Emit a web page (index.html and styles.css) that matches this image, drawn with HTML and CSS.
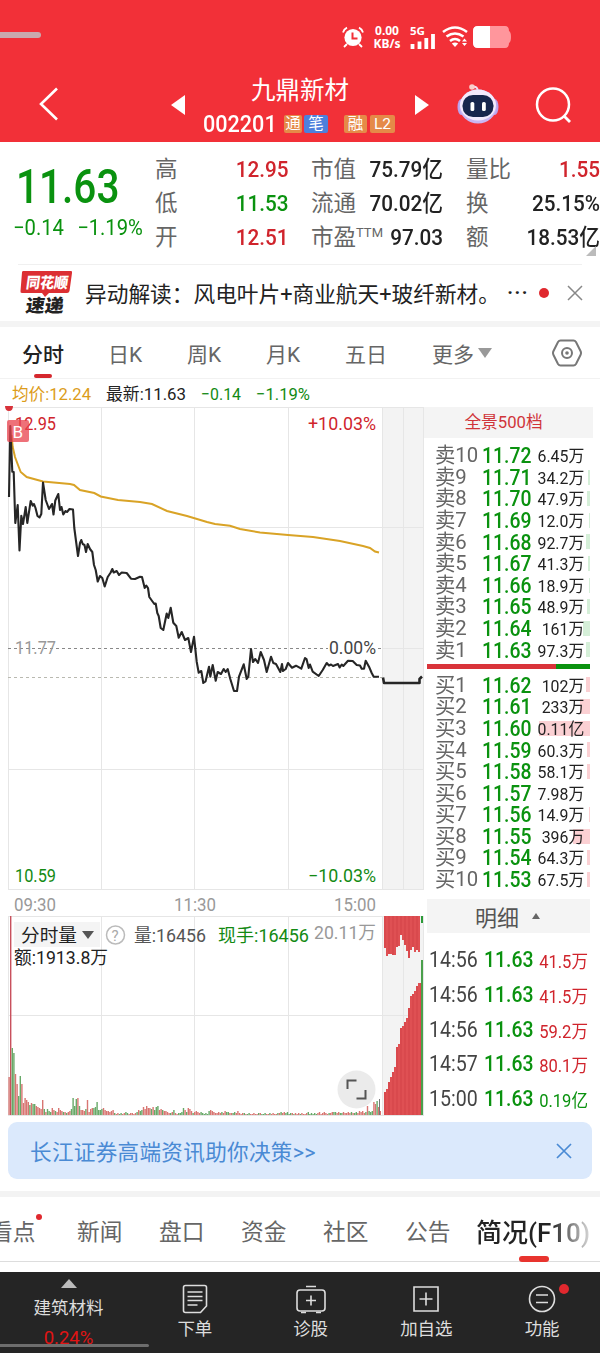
FILE: index.html
```html
<!DOCTYPE html>
<html lang="zh-CN">
<head>
    <meta charset="UTF-8">
    <meta name="viewport" content="width=device-width, initial-scale=1.0">
    <title>九鼎新材 002201</title>
    <link rel="stylesheet" href="styles.css">
</head>
<body>

    <header class="header">
        <div class="status-bar">
            <span class="pill"></span>
            <svg class="alarm" width="22" height="22" viewBox="0 0 22 22">
                <circle cx="11" cy="11.5" r="8.6" fill="#fff"/>
                <path d="M1 6.5Q2 3 5 1.6M21 6.5Q20 3 17 1.6M5 18l-3 3M17 18l3 3" stroke="#fff" stroke-width="1.8" fill="none"/>
                <path d="M10.5 6.5v6h5" stroke="#f23038" stroke-width="2" fill="none"/>
            </svg>
            <span class="speed">0.00<br>KB/s</span>
            <svg class="signal" width="25" height="24" viewBox="0 -2 25 24">
                <text x="0" y="8" textLength="15" lengthAdjust="spacingAndGlyphs">5G</text>
                <path d="M2.500 22v-5M9.500 22v-7.500M16.300 22V11M23 22V7" stroke="#fff" stroke-width="3.800"/>
            </svg>
            <svg class="wifi" width="26" height="21" viewBox="0 0 26 21">
                <path d="M1 6Q13-3 25 6M4.500 10.500q8.500-6 17 0M8 15q5-4 10 0" stroke="#fff" stroke-width="2.600" fill="none"/>
                <path d="M9.800 17.500q3.200-2 6.400 0L13 21zM20 15.500l2.500-3 2.500 3zM20 17l2.500 3 2.500-3z" fill="#fff"/>
            </svg>
            <svg class="battery" width="38" height="22" viewBox="0 0 38 22">
                <path d="M5 0h27q4 0 4 5 2 1 2 6t-2 6q0 5-4 5H5q-5 0-5-5V5q0-5 5-5z" fill="#ff969c"/>
                <path d="M5 0h12v22H5q-5 0-5-5V5q0-5 5-5z" fill="#fff"/>
            </svg>
        </div>
        <div class="title-bar">
            <svg class="back" width="20" height="34" viewBox="0 0 20 34"><path d="M18 1.500L2 17l16 15.500" stroke="#fff" stroke-width="2.600" fill="none"/></svg>
            <svg class="prev" width="14" height="20" viewBox="0 0 14 20"><path d="M14 0v20L0 10z" fill="#fff"/></svg>
            <div class="stock">
                <div class="stock-name">九鼎新材</div>
                <div class="stock-code">
                    <span class="code">002201</span>
                    <span class="tag tag-tong">通</span>
                    <span class="tag tag-blue">笔</span>
                    <span class="tag tag-rong">融</span>
                    <span class="tag tag-l2">L2</span>
                </div>
            </div>
            <svg class="next" width="14" height="20" viewBox="0 0 14 20"><path d="M0 0v20L14 10z" fill="#fff"/></svg>
            <svg class="robot" width="42" height="40" viewBox="0 0 42 40">
                <path d="M15.500 3Q21 2 20.500 7" stroke="#f4ddf0" stroke-width="2" fill="none"/>
                <circle cx="15" cy="3" r="2.800" fill="#f9cfcb"/>
                <ellipse cx="4.500" cy="23" rx="4" ry="8" fill="#b9a5ee"/>
                <ellipse cx="37.500" cy="23" rx="4" ry="8" fill="#b9a5ee"/>
                <ellipse cx="21" cy="22.500" rx="18.500" ry="17" fill="#c9b6f3"/>
                <ellipse cx="21" cy="21" rx="18" ry="15.500" fill="#f3eafd"/>
                <rect x="5.500" y="11" width="31" height="22" rx="10.500" fill="#17264d"/>
                <rect x="13.500" y="18" width="3.800" height="9" rx="1.600" fill="#fff"/>
                <rect x="25" y="18" width="3.800" height="9" rx="1.600" fill="#fff"/>
            </svg>
            <svg class="search" width="37" height="36" viewBox="0 0 37 36"><circle cx="18" cy="17.500" r="16" stroke="#fff" stroke-width="2.500" fill="none"/><path d="M29 29l6 6" stroke="#fff" stroke-width="2.800"/></svg>
        </div>
    </header>

    <section class="quote">
        <div class="price">
            <div class="price-now">11.63</div>
            <div class="price-change"><span>−0.14</span><span>−1.19%</span></div>
        </div>
        <dl class="stats stats-a">
            <dt>高</dt><dd class="red">12.95</dd>
            <dt>低</dt><dd class="green">11.53</dd>
            <dt>开</dt><dd class="red">12.51</dd>
        </dl>
        <dl class="stats stats-b">
            <dt>市值</dt><dd>75.79亿</dd>
            <dt>流通</dt><dd>70.02亿</dd>
            <dt>市盈<sup>TTM</sup></dt><dd>97.03</dd>
        </dl>
        <dl class="stats stats-c">
            <dt>量比</dt><dd class="red">1.55</dd>
            <dt>换</dt><dd>25.15%</dd>
            <dt>额</dt><dd>18.53亿</dd>
        </dl>
        <span class="corner"></span>
    </section>

    <section class="news">
        <svg class="news-logo" width="54" height="45" viewBox="0 0 54 45">
            <path d="M4 1h48q1.500 0 1 2l-2.500 18q-.5 2-2.500 2H30l-4 4-3-4H3q-2 0-1.500-2L3 2.500Q3 1 4 1z" fill="#dc2f33"/>
            <g transform="skewX(-8)">
                <text class="logo-top" x="9" y="18" textLength="42" lengthAdjust="spacingAndGlyphs">同花顺</text>
                <text class="logo-bottom" x="12" y="42" textLength="38" lengthAdjust="spacingAndGlyphs">速递</text>
            </g>
        </svg>
        <span class="news-text">异动解读：风电叶片+商业航天+玻纤新材。</span>
        <span class="dots">···</span>
        <span class="red-dot"></span>
        <svg class="close" width="16" height="16" viewBox="0 0 16 16"><path d="M1 1l14 14M15 1L1 15" stroke="#888" stroke-width="1.500"/></svg>
    </section>

    <nav class="period">
        <span class="active">分时</span>
        <span>日K</span>
        <span>周K</span>
        <span>月K</span>
        <span>五日</span>
        <span class="more">更多<i class="tri-down"></i></span>
        <svg width="30" height="28" viewBox="0 0 30 28"><path d="M8.500 1.500h13Q23 1.500 24 3l4.500 9q1 2 0 4L24 25q-1 1.500-2.500 1.500h-13Q7 26.500 6 25l-4.500-9q-1-2 0-4L6 3q1-1.500 2.500-1.500z" fill="none" stroke="#777" stroke-width="2"/><circle cx="15" cy="14" r="5" fill="none" stroke="#777" stroke-width="2"/><circle cx="15" cy="14" r="1.800" fill="#777"/></svg>
    </nav>

    <main class="board">
        <svg class="chart" width="424" height="739" viewBox="0 379 424 739">
            <g class="info">
                <text x="12" y="400" textLength="79" lengthAdjust="spacingAndGlyphs" fill="#dc9c1a">均价:12.24</text>
                <text x="106" y="400" textLength="80" lengthAdjust="spacingAndGlyphs" fill="#222">最新:11.63</text>
                <text x="201" y="400" textLength="40" lengthAdjust="spacingAndGlyphs" fill="#138a13">−0.14</text>
                <text x="256" y="400" textLength="54" lengthAdjust="spacingAndGlyphs" fill="#138a13">−1.19%</text>
            </g>

            <rect x="382" y="407" width="41" height="482" fill="#f3f3f3"/>
            <rect x="382" y="916" width="41" height="199" fill="#f3f3f3"/>
            <path class="grid" d="M8 407.500H424M8 527.500H424M8 769.500H424M8 889.500H424M8 916.500H424M8 1015.500H424M8 1115.500H424"/>
            <path class="grid" d="M8.500 407V889M101.500 407V889M194.500 407V889M288.500 407V889M382.500 407V889M403.500 407V889M423.500 407V889"/>
            <path class="grid" d="M8.500 916V1115M101.500 916V1115M194.500 916V1115M288.500 916V1115M382.500 916V1115M403.500 916V1115M423.500 916V1115"/>
            <path d="M382 648.500h41" class="grid"/>
            <path d="M8 648.500H328M378 648.500h5" stroke="#888" stroke-dasharray="3 3"/>
            <path d="M8 677.500H382" stroke="#b9b9b0" stroke-dasharray="3 3"/>

            <g id="volume" shape-rendering="crispEdges"></g>

            <polyline id="avg-line" class="avg"/>
            <polyline id="price-line" class="line"/>
            <path class="line auction" d="M383 677.500l1 5.500H419.500V679l2.500-2.500"/>

            <g class="axis">
                <text x="15" y="429.500" textLength="41" lengthAdjust="spacingAndGlyphs" fill="#d0242c">12.95</text>
                <text x="308" y="429.500" textLength="68" lengthAdjust="spacingAndGlyphs" fill="#d0242c">+10.03%</text>
                <text x="15" y="654" textLength="41" lengthAdjust="spacingAndGlyphs" fill="#999">11.77</text>
                <text x="329" y="654" textLength="47" lengthAdjust="spacingAndGlyphs" fill="#444">0.00%</text>
                <text x="15" y="882" textLength="41" lengthAdjust="spacingAndGlyphs" fill="#138a13">10.59</text>
                <text x="308" y="882" textLength="68" lengthAdjust="spacingAndGlyphs" fill="#138a13">−10.03%</text>
                <text x="14" y="910.500" textLength="42" lengthAdjust="spacingAndGlyphs" fill="#999">09:30</text>
                <text x="174" y="910.500" textLength="42" lengthAdjust="spacingAndGlyphs" fill="#999">11:30</text>
                <text x="334" y="910.500" textLength="42" lengthAdjust="spacingAndGlyphs" fill="#999">15:00</text>
            </g>

            <path d="M5 406h8q0 5-4 5t-4-5z" fill="#d8323a"/>
            <rect x="7" y="420" width="22" height="22" rx="2" fill="#e8424c" fill-opacity=".75"/>
            <text x="12.500" y="438" class="buy-mark">B</text>

            <rect x="14" y="922" width="86" height="25" fill="#f4f4f4"/>
            <g class="vol-info">
                <text x="21" y="942" textLength="56" lengthAdjust="spacingAndGlyphs" fill="#222">分时量</text>
                <path d="M82 931h12l-6 8z" fill="#555"/>
                <circle cx="115.500" cy="935" r="9" fill="none" stroke="#bbb" stroke-width="1.500"/>
                <text x="111.500" y="940.500" class="help">?</text>
                <text x="134" y="942" textLength="72" lengthAdjust="spacingAndGlyphs" fill="#555">量:16456</text>
                <text x="218" y="942" textLength="91" lengthAdjust="spacingAndGlyphs" fill="#138a13">现手:16456</text>
                <text x="314" y="939" textLength="62" lengthAdjust="spacingAndGlyphs" fill="#999">20.11万</text>
                <text x="14" y="963.500" textLength="94" lengthAdjust="spacingAndGlyphs" fill="#222">额:1913.8万</text>
            </g>

            <circle cx="356.500" cy="1089.500" r="19" fill="#ebebeb"/>
            <path d="M347.500 1089v-8.500h9M365.500 1090v8.500h-9" fill="none" stroke="#555" stroke-width="2"/>
        </svg>

        <aside class="depth">
            <div class="depth-title">全景500档</div>
            <div class="orders" id="asks"></div>
            <div class="ratio"><span></span></div>
            <div class="orders" id="bids"></div>
            <div class="detail-title">明细<i class="tri-up"></i></div>
            <div class="ticks" id="ticks"></div>
        </aside>
    </main>

    <div class="banner">
        <span>长江证券高端资讯助你决策&gt;&gt;</span>
        <svg width="16" height="16" viewBox="0 0 16 16"><path d="M1 1l14 14M15 1L1 15" stroke="#4a8ad4" stroke-width="1.700"/></svg>
    </div>

    <nav class="sections">
        <span class="first">看点<i class="red-dot small"></i></span>
        <span>新闻</span>
        <span>盘口</span>
        <span>资金</span>
        <span>社区</span>
        <span>公告</span>
        <span class="active">简况(F10)</span>
    </nav>

    <footer class="bottom">
        <div class="sector">
            <i class="tri-up light"></i>
            <span>建筑材料</span>
            <b>0.24%</b>
        </div>
        <div class="item">
            <svg width="28" height="30" viewBox="0 0 28 30"><path d="M4.500 1.500h19q2 0 2 2V22l-6 6.500h-15q-2 0-2-2v-23q0-2 2-2zM6.500 8h15M6.500 12.500h15M6.500 16.500h15M6.500 21h10"/></svg>
            <span>下单</span>
        </div>
        <div class="item">
            <svg width="30" height="30" viewBox="0 0 30 30"><rect x="1" y="6" width="28" height="21" rx="3"/><path d="M10 2.500h10M15 11.500v10M10 16.500h10M5 28.500h5M20 28.500h5"/></svg>
            <span>诊股</span>
        </div>
        <div class="item">
            <svg width="28" height="30" viewBox="0 0 28 30"><path d="M2 3h24v24H2zM14 8.500v13M7.500 15h13"/></svg>
            <span>加自选</span>
        </div>
        <div class="item">
            <svg width="28" height="30" viewBox="0 0 28 30"><circle cx="14" cy="15" r="12.500"/><path d="M8 11h12M8 18.500h12"/></svg>
            <span>功能</span>
            <i class="red-dot badge"></i>
        </div>
        <span class="home-bar"></span>
    </footer>

    <script src="app.js"></script>
</body>
</html>
```

FILE: styles.css
```css
* {
    box-sizing: border-box;
}
body {
    margin: 0;
    width: 600px;
    height: 1353px;
    overflow: hidden;
    background: #fff;
    color: #222;
    font-family: Roboto, "Noto Sans CJK SC", sans-serif;
}
svg {
    display: block;
    flex: none;
}
i {
    font-style: normal;
}
.red {
    color: #d0242c;
}
.green {
    color: #0a920f;
}

/* header */
.header {
    height: 142px;
    background: #f23038;
    color: #fff;
}
.status-bar {
    display: flex;
    align-items: center;
    height: 73px;
}
.pill {
    width: 41px;
    height: 6px;
    margin-top: -3px;
    background: #c9a9ad;
    border-radius: 0 3px 3px 0;
}
.alarm {
    margin-left: 301px;
}
.speed {
    width: 28px;
    margin-left: 9px;
    font: bold 12px/13px "Noto Sans", sans-serif;
    text-align: center;
    white-space: nowrap;
}
.signal {
    margin-left: 9px;
}
.signal text {
    font: bold 11px "Noto Sans", sans-serif;
    fill: #fff;
}
.wifi {
    margin-left: 7px;
}
.battery {
    margin-left: 5px;
}
.title-bar {
    display: flex;
    height: 69px;
}
.back {
    margin: 14px 0 0 39px;
}
.prev {
    margin: 22px 0 0 112px;
}
.stock {
    width: 230px;
    padding-left: 18px;
}
.stock-name {
    width: 194px;
    height: 34px;
    line-height: 36px;
    font-size: 24.500px;
    text-align: center;
}
.stock-code {
    display: flex;
    align-items: center;
    height: 34px;
}
.code {
    width: 81px;
    font-size: 24px;
    font-weight: 500;
    transform: scaleX(.9);
    transform-origin: left;
}
.tag {
    height: 18px;
    line-height: 18px;
    font-size: 15.500px;
    text-align: center;
    background: #e58a48;
    border-radius: 2px;
}
.tag-tong {
    width: 18px;
}
.tag-blue {
    width: 24px;
    margin-left: 2px;
    background: #4d80dc;
}
.tag-rong {
    width: 23px;
    margin-left: 16px;
}
.tag-l2 {
    width: 25px;
    margin-left: 3px;
}
.next {
    margin: 22px 0 0 0;
}
.robot {
    margin: 11px 0 0 28px;
}
.search {
    margin: 14px 0 0 36px;
}

/* quote */
.quote {
    position: relative;
    display: flex;
    height: 122px;
    padding-top: 10px;
}
.price {
    width: 155px;
    padding-left: 16px;
    color: #0a920f;
}
.price-now {
    height: 62px;
    line-height: 69px;
    font-size: 48px;
    font-weight: 500;
    transform: scaleX(.845);
    transform-origin: left;
}
.price-change {
    display: flex;
    gap: 14px;
    margin-left: -3px;
    font-size: 21.500px;
    line-height: 27px;
    transform: scaleX(.94);
    transform-origin: left;
}
.stats {
    display: grid;
    grid-template-columns: auto 1fr;
    grid-template-rows: repeat(3, 34px);
    align-items: center;
    margin: 0;
    line-height: 34px;
}
.stats-a {
    width: 133px;
}
.stats-b {
    width: 132px;
    margin-left: 23px;
}
.stats-c {
    width: 134px;
    margin-left: 23px;
}
.stats dt {
    color: #666;
    font-size: 22.500px;
    white-space: nowrap;
}
.stats sup {
    font-size: 13px;
    line-height: 0;
    vertical-align: 8px;
}
.stats dd {
    margin: 0 0 0 -30px;
    font-size: 22.500px;
    font-weight: 500;
    text-align: right;
    white-space: nowrap;
    transform: scaleX(.92);
    transform-origin: right;
}
.corner {
    position: absolute;
    right: 4px;
    bottom: 8px;
    border: 5px solid #bbb;
    border-top-color: transparent;
    border-left-color: transparent;
}

/* news */
.news {
    position: relative;
    display: flex;
    align-items: center;
    height: 63px;
    padding-left: 19px;
    border-bottom: 6px solid #f4f4f4;
}
.news::before {
    content: "";
    position: absolute;
    top: 0;
    left: 18px;
    right: 18px;
    border-top: 1px solid #f0f0f0;
}
.news-text {
    width: 420px;
    margin-left: 12px;
    font-size: 21.700px;
    white-space: nowrap;
}
.logo-top {
    font: 900 15px "Noto Sans CJK SC", sans-serif;
    fill: #fff;
}
.logo-bottom {
    font: 900 18px "Noto Sans CJK SC", sans-serif;
    fill: #222;
}
.dots {
    width: 19px;
    margin-left: 2px;
    font-size: 22px;
    font-weight: 500;
    letter-spacing: 1px;
}
.red-dot {
    flex: none;
    width: 10px;
    height: 10px;
    background: #e0282e;
    border-radius: 50%;
}
.news .red-dot {
    margin-left: 13px;
}
.close {
    margin-left: 18px;
}

/* period tabs */
.period {
    display: flex;
    align-items: center;
    height: 52px;
    padding-left: 22px;
    border-bottom: 1px solid #f2f2f2;
    color: #666;
    font-size: 21px;
}
.period span {
    position: relative;
    width: 79px;
    white-space: nowrap;
}
.period .active {
    width: 86px;
    color: #222;
    font-weight: 500;
}
.period .active::after {
    content: "";
    position: absolute;
    left: 12px;
    bottom: -10px;
    width: 18px;
    height: 4px;
    background: #d5272d;
    border-radius: 2px;
}
.period .more {
    display: flex;
    align-items: center;
    width: 120px;
    margin-left: 8px;
}
.tri-down {
    margin-left: 4px;
    border: 7.500px solid transparent;
    border-top: 10px solid #999;
    border-bottom: 0;
}

/* chart */
.board {
    display: flex;
    height: 739px;
}
.chart text {
    font-size: 18px;
}
.chart .info text {
    font-size: 17px;
}
.grid {
    stroke: #e6e6e6;
    fill: none;
}
.line {
    fill: none;
    stroke: #262626;
    stroke-width: 2.100;
    stroke-linejoin: round;
}
.auction {
    stroke-width: 2.600;
}
.avg {
    fill: none;
    stroke: #d9a326;
    stroke-width: 2;
}
.chart .buy-mark {
    font-size: 17px;
    fill: #fff;
}
.chart .help {
    font-size: 15px;
    fill: #aaa;
}

/* order book */
.depth {
    width: 169px;
    padding-top: 28px;
}
.depth-title {
    height: 31px;
    margin-bottom: 7px;
    padding-right: 10px;
    background: #f4f4f4;
    color: #d0343a;
    font-size: 16.700px;
    line-height: 31px;
    text-align: center;
}
.order {
    position: relative;
    display: flex;
    align-items: center;
    height: 21.600px;
    margin-right: 3px;
    padding-left: 11px;
    line-height: 21px;
}
.order span {
    position: relative;
    white-space: nowrap;
}
.level {
    flex: none;
    width: 47px;
    color: #666;
    font-size: 21px;
    transform: scaleX(.97);
    transform-origin: left;
}
.deal {
    flex: none;
    width: 50px;
    color: #0a920f;
    font-size: 22px;
    font-weight: 500;
    transform: scaleX(.88);
    transform-origin: left;
}
.hands {
    flex: 1;
    min-width: 0;
    display: flex;
    justify-content: flex-end;
    top: 1px;
    padding-right: 6px;
    font-size: 16.500px;
    transform: scaleX(.96);
    transform-origin: right;
}
.bar {
    position: absolute;
    top: 3px;
    right: 0;
    height: 15px;
    background: #d5efd8;
}
#bids .bar {
    background: #fbd0d3;
}
.ratio {
    height: 5px;
    margin: 3px 3px 5.500px;
    background: #0a920f;
}
.ratio span {
    display: block;
    width: 129px;
    height: 5px;
    background: #d9333a;
}
.detail-title {
    display: flex;
    align-items: center;
    justify-content: center;
    height: 34px;
    margin: 8.500px 3px 9px;
    padding-right: 2px;
    background: #f4f4f4;
    color: #555;
    font-size: 22px;
}
.tri-up {
    margin-left: 13px;
    border: 4.500px solid transparent;
    border-bottom: 6px solid #666;
    border-top: 0;
}
.tick {
    display: flex;
    align-items: center;
    height: 34.900px;
    padding: 0 5px;
}
.tick span {
    white-space: nowrap;
}
.tick .time {
    flex: none;
    width: 55px;
    color: #444;
    font-size: 22px;
    transform: scaleX(.89);
    transform-origin: left;
}
.tick .amount {
    flex: 1;
    display: flex;
    justify-content: flex-end;
    min-width: 0;
    padding-top: 1px;
    font-size: 18px;
    transform: scaleX(.92);
    transform-origin: right;
}

/* banner and section tabs */
.banner {
    display: flex;
    align-items: center;
    justify-content: space-between;
    height: 57px;
    margin: 4px 8px 12px;
    padding: 0 20px 0 22px;
    background: #dbe9fc;
    border-radius: 9px;
    color: #4a8ad4;
    font-size: 21.600px;
    letter-spacing: .3px;
}
.sections {
    position: relative;
    display: flex;
    align-items: center;
    height: 71px;
    padding-top: 2px;
    border-top: 6px solid #f3f3f3;
    border-bottom: 1px solid #ddd;
    color: #666;
    font-size: 22.700px;
}
.sections span {
    position: relative;
    flex: none;
    width: 82px;
    white-space: nowrap;
}
.sections .first {
    width: 87px;
    margin-left: -10px;
}
.sections .small {
    position: absolute;
    top: 0;
    left: 46px;
    width: 6px;
    height: 6px;
}
.sections .active {
    width: 115px;
    margin-left: -11px;
    color: transparent;
    background: linear-gradient(90deg, #222 65%, #ddd 100%);
    -webkit-background-clip: text;
    background-clip: text;
    font-size: 26px;
    font-weight: 500;
}
.sections::after {
    content: "";
    position: absolute;
    left: 519px;
    bottom: -1px;
    width: 30px;
    height: 6px;
    background: #e8342e;
    border-radius: 3px;
}

/* bottom bar */
.bottom {
    position: relative;
    display: flex;
    height: 81px;
    margin-top: 10px;
    background: #252525;
    color: #ddd;
    font-size: 17.500px;
}
.sector {
    display: flex;
    flex-direction: column;
    align-items: center;
    width: 137px;
    padding-top: 7px;
}
.sector span {
    height: 28px;
    margin-top: 6px;
    line-height: 28px;
}
.sector b {
    height: 34px;
    color: #e01414;
    font-size: 18.500px;
    font-weight: 400;
    line-height: 33px;
}
.light {
    margin: 0;
    border-width: 0 8px 9px;
    border-bottom-color: #bbb;
}
.item {
    position: relative;
    display: flex;
    flex: 1;
    flex-direction: column;
    align-items: center;
    padding-top: 12px;
}
.item svg {
    fill: none;
    stroke: #ddd;
    stroke-width: 1.600;
}
.item span {
    line-height: 31px;
}
.badge {
    position: absolute;
    top: 12px;
    left: 75px;
}
.home-bar {
    position: absolute;
    left: 0;
    bottom: 6px;
    width: 149px;
    height: 3px;
    background: rgba(140, 140, 140, .7);
    border-radius: 0 2px 2px 0;
}
```

FILE: app.js
```js
// order book: price, hands, bar width
const asks = [
    ["11.72", "6.45万", 0], ["11.71", "34.2万", 2], ["11.70", "47.9万", 3], ["11.69", "12.0万", 1],
    ["11.68", "92.7万", 4], ["11.67", "41.3万", 2], ["11.66", "18.9万", 1], ["11.65", "48.9万", 3],
    ["11.64", "161万", 7], ["11.63", "97.3万", 4]
];
const bids = [
    ["11.62", "102万", 4], ["11.61", "233万", 10], ["11.60", "0.11亿", 51], ["11.59", "60.3万", 3],
    ["11.58", "58.1万", 3], ["11.57", "7.98万", 0], ["11.56", "14.9万", 1], ["11.55", "396万", 17],
    ["11.54", "64.3万", 3], ["11.53", "67.5万", 3]
];
const ticks = [
    ["14:56", "11.63", "41.5万", "red"], ["14:56", "11.63", "41.5万", "red"],
    ["14:56", "11.63", "59.2万", "red"], ["14:57", "11.63", "80.1万", "red"],
    ["15:00", "11.63", "0.19亿", "green"]
];

function orderRow(name, row) {
    return `<div class="order"><i class="bar" style="width:${row[2]}px"></i>
        <span class="level">${name}</span><span class="deal">${row[0]}</span><span class="hands">${row[1]}</span></div>`;
}

document.getElementById("asks").innerHTML = asks.map((r, i) => orderRow("卖" + (10 - i), r)).join("");
document.getElementById("bids").innerHTML = bids.map((r, i) => orderRow("买" + (i + 1), r)).join("");
document.getElementById("ticks").innerHTML = ticks.map(t =>
    `<div class="tick"><span class="time">${t[0]}</span><span class="deal">${t[1]}</span><span class="amount ${t[3]}">${t[2]}</span></div>`
).join("");

// price and average lines
const price = "9,497 10.3,426 12.3,471.7 13.7,472 15.3,523 17.7,505 19.5,550.5 21.3,515.7 23,524 25.7,507 27.3,523 30.7,501 32.7,505.700 34,504 35.500,508 37.500,516 39.500,517.500 41.300,514 43,482.500 45.700,500 49,509 52,504 53.500,514.500 55.300,500.500 58.300,494 60,510 61.500,507 63.300,514.500 65.500,511 67,512 69.500,509 73,509.500 74.300,528 78,556 80,543 81.300,540 82.700,544 84.500,545 86,552 87.700,544 90,549 92.300,552 94,565 95.700,570 97.700,581.500 100,576 102.300,578 104.700,586.500 107.700,577 110.700,572.500 112.300,569 113.700,572.500 116.700,571 119,575 121.700,572.500 126.700,573 131,578.700 135,579 140,576.700 142,577 144.700,588 146.300,585.700 148,588 149.300,597 154.300,604 155.700,603.500 157.300,613 158.700,616 160.700,628 163.300,630 166.700,613.500 168.300,618 170.700,607.700 173.300,622.700 176.300,626 178.700,637.700 181.700,632 185,640 188.300,638 191,652 194,636.700 196.700,661.700 198.700,672.700 201.300,671 203.300,683 205.500,681.500 209,666.700 210.300,676.700 212.700,665 215.700,680.700 217.700,672 221,674 223.700,669 225.700,672 227.700,669 230.300,679 234,691 237,691 239,676.700 243.700,664.300 246.700,679 248.300,676.700 251,649 253,662 255.300,659 258,663 260.700,652 264,660 266.700,672 271,656.700 273.300,663 276,664 280.300,672 282,664 283,671 285.700,669 288,663 292,667.700 296,665.700 301.300,668.700 305,658 306.500,659 308.700,668 310,664.500 312.700,671.700 318.700,676 322.700,670 326.700,663 329,665.500 331,664.500 333,666 338,664 339.700,667.500 341.700,664.500 343.300,666 348,660.700 352.700,661 356.700,665 360,665.500 361.700,668.700 364,668.700 365.700,660.700 369,666.700 371.700,673 373.700,676.700 379,676.700";
const avg = "11.500,435 12.700,447 15,457 18,465 20.700,472 26.700,477 43,481.500 70,484 74,485 80,490 94.300,493 100.700,496.500 118,500 140,502 152,504 167,511 187,516 207,522 215,524 230,525.700 240,529 260,532.500 288,535 313,537 340,541 363,546 370,548 375,551.500 379,552.500";
document.getElementById("price-line").setAttribute("points", price);
document.getElementById("avg-line").setAttribute("points", avg);

// minute volume, one bar every 1.6px
const heights = [38,199,67,62,41,31,19,39,31,12,17,15,13,10,12,11,11,9,8,7,6,15,6,3,6,4,3,7,5,4,3,7,5,4,3,3,2,3,4,6,17,9,16,17,9,5,5,4,6,15,3,6,7,7,8,13,5,5,6,7,5,4,4,3,4,5,2,1,2,1,2,1,2,3,2,1,2,2,1,2,3,5,4,5,8,6,9,7,7,6,8,5,8,9,5,6,5,4,4,3,2,2,3,5,2,1,2,2,3,7,5,3,7,6,4,2,3,4,3,2,3,2,1,2,1,4,5,4,3,2,2,3,2,3,2,4,3,3,2,2,2,3,2,4,2,1,2,2,1,1,2,1,1,2,1,1,2,2,1,1,2,1,1,2,1,2,1,1,2,2,3,2,3,2,3,1,2,2,1,2,1,2,1,2,1,1,2,3,1,2,1,2,1,2,3,1,2,3,2,1,2,2,3,3,3,2,3,2,2,3,2,2,3,2,3,2,2,3,2,4,3,4,2,3,9,4,3,4,13,11,14,8,4];
const colors = "rrggrrggrrrrrgrggrrrrrgrgggrrgrrrrgrgrrggggrgrrrgrrrrggggggrrrrrrrg";
const svg = [];
function addBar(x, y, w, h, color) {
    svg.push(`<rect x="${x}" y="${y}" width="${w}" height="${h}" fill="${color}"/>`);
}
heights.forEach((h, i) => {
    const c = colors[i % colors.length] === "r" ? "#d87672" : "#68a968";
    svg.push(`<rect x="${(8.4 + i * 1.6).toFixed(1)}" y="${1115 - h}" width="1.4" height="${h}" fill="${i === 1 ? "#c8505c" : c}" shape-rendering="auto"/>`);
});
addBar(379, 1099, 1, 16, "#777");

// call auction columns
const high = [32, 40, 38, 38, 39, 39, 31, 30, 19, 24, 29, 35, 42, 34, 31, 36, 34, 36];
const low = [23, 26, 33, 38, 43, 48, 68, 71, 87, 89, 93, 97, 107, 119, 121, 124, 129, 132];
high.forEach((h, i) => addBar(384 + i * 2, 916, 2, h, i % 2 ? "#df5053" : "#d9494d"));
low.forEach((h, i) => addBar(384 + i * 2, 1115 - h, 2, h, i % 2 ? "#df5053" : "#d9494d"));
addBar(420, 1115 - 132, 2, 132, "#d9494d");
addBar(421, 916, 2, 7, "#2c9a38");
addBar(421, 960, 2, 155, "#4aa04c");
document.getElementById("volume").innerHTML = svg.join("");
```
